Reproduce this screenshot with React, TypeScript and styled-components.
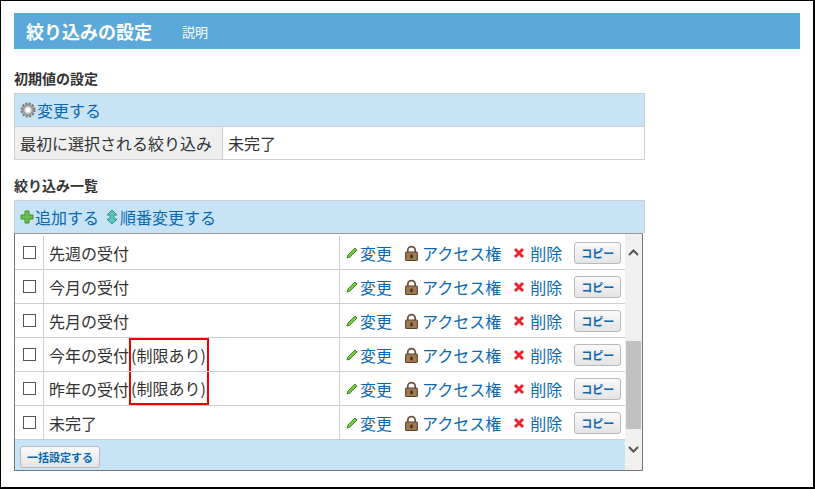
import React from 'react';
import styled, { createGlobalStyle } from 'styled-components';

const ROWS = [
  { name: '先週の受付' },
  { name: '今月の受付' },
  { name: '先月の受付' },
  { name: '今年の受付', limited: true },
  { name: '昨年の受付', limited: true },
  { name: '未完了' },
];

const Global = createGlobalStyle`
  html, body { margin: 0; padding: 0; background: #fff; }
  body { font-family: "Noto Sans CJK JP", "Liberation Sans", sans-serif; color: #333; }
`;

const Frame = styled.div`
  width: 815px;
  height: 489px;
  box-sizing: border-box;
  border: 1px solid #000;
  border-right-width: 2px;
  border-bottom-width: 2px;
  padding: 12px 13px 0 13px;
`;

const Header = styled.div`
  height: 36px;
  background: #5ba9da;
  display: flex;
  align-items: center;
  padding-left: 12px;
  gap: 30px;
  color: #fff;
  h1 { margin: 0; font-size: 18px; font-weight: 700; }
  span { font-size: 13px; }
`;

const SectionTitle = styled.div`
  font-size: 14px;
  font-weight: 700;
  margin: 18px 0 6px;
  line-height: 18px;
`;

const Table = styled.div`
  width: 629px;
  border: 1px solid #cfcfcf;
  font-size: 16px;
`;

const Toolbar = styled.div`
  height: 32px;
  background: #c7e3f6;
  display: flex;
  align-items: center;
  padding-left: 5px;
  gap: 6px;
  font-size: 16px;
`;

const Link = styled.span<{ $gap?: number }>`
  color: #0b68b0;
  display: inline-flex;
  align-items: center;
  gap: ${p => p.$gap ?? 1}px;
  white-space: nowrap;
`;

const InfoRow = styled.div`
  display: flex;
  height: 32px;
  border-top: 1px solid #cfcfcf;
  > div { display: flex; align-items: center; padding-left: 5px; }
  > div:first-child { width: 202px; background: #efefef; border-right: 1px solid #cfcfcf; }
`;

const ListBox = styled.div`
  width: 629px;
  height: 238px;
  box-sizing: border-box;
  border: 1px solid #777;
  border-top-color: #999;
  display: flex;
  overflow: hidden;
`;

const ListContent = styled.div`
  flex: 1;
  overflow: hidden;
  padding-top: 2px;
`;

const Row = styled.div`
  display: flex;
  height: 33px;
  border-bottom: 1px solid #cfcfcf;
  font-size: 16px;
`;

const CheckCell = styled.div`
  width: 28px;
  border-right: 1px solid #cfcfcf;
  display: flex;
  align-items: center;
  justify-content: center;
`;

const Box = styled.span`
  width: 11px;
  height: 11px;
  border: 1px solid #555;
  background: #fff;
`;

const NameCell = styled.div`
  width: 290px;
  border-right: 1px solid #cfcfcf;
  display: flex;
  align-items: center;
  padding-left: 5px;
`;

const Limited = styled.span<{ $first: boolean; $last: boolean }>`
  border: 2px solid #e00;
  border-top-width: ${p => (p.$first ? 2 : 0)}px;
  border-bottom-width: ${p => (p.$last ? 2 : 0)}px;
  height: 33px;
  box-sizing: border-box;
  display: flex;
  align-items: center;
  margin-top: ${p => (p.$first ? -1 : 0)}px;
  padding-right: 1px;
`;

const ActionCell = styled.div`
  flex: 1;
  display: flex;
  align-items: center;
  padding-left: 5px;
  gap: 12px;
`;

const SmallButton = styled.button`
  font-family: inherit;
  font-size: 11px;
  font-weight: 700;
  color: #0b68b0;
  background: linear-gradient(#fafafa, #e4e4e4);
  border: 1px solid #b9b9b9;
  border-radius: 3px;
  height: 22px;
  padding: 0 6px;
  margin-left: 0;
  min-width: 41px;
`;

const Footer = styled.div`
  height: 33px;
  background: #c7e3f6;
  display: flex;
  align-items: center;
  padding-left: 5px;
`;

const ScrollBar = styled.div`
  width: 17px;
  background: #f0f0f0;
  display: flex;
  flex-direction: column;
  align-items: center;
`;

const Arrow = styled.div`
  height: 17px;
  width: 17px;
  display: flex;
  align-items: center;
  justify-content: center;
`;

const Track = styled.div`
  flex: 1;
  width: 100%;
  display: flex;
  flex-direction: column;
  padding-top: 80px;
  padding-bottom: 12px;
  box-sizing: border-box;
`;

const Thumb = styled.div`
  flex: 1;
  background: #c1c1c1;
  margin: 0 1px;
`;

const Gear = () => (
  <svg width="16" height="16" viewBox="0 0 16 16">
    <circle cx="8" cy="8" r="6.5" fill="#aaa" stroke="#777" strokeDasharray="2 1.4" strokeWidth="2" />
    <circle cx="8" cy="8" r="4.2" fill="#e5e5e5" stroke="#888" />
    <circle cx="8" cy="8" r="2" fill="#fff" />
  </svg>
);

const Plus = () => (
  <svg width="14" height="14" viewBox="0 0 14 14">
    <path d="M5 1h4v4h4v4H9v4H5V9H1V5h4z" fill="#6cc04a" stroke="#3f8f2a" />
  </svg>
);

const UpDown = () => (
  <svg width="14" height="16" viewBox="0 0 14 16">
    <path d="M7 1l5 5H9v4h3l-5 5-5-5h3V6H2z" fill="#5cc9c0" stroke="#2f948c" />
  </svg>
);

const Pencil = () => (
  <svg width="14" height="14" viewBox="0 0 14 14">
    <path d="M2 12l1-3 7-7 2 2-7 7z" fill="#7ac943" stroke="#3e8a1e" />
  </svg>
);

const Lock = () => (
  <svg width="15" height="16" viewBox="0 0 14 15">
    <path d="M3.5 7V5a3.5 3.5 0 0 1 7 0v2" fill="none" stroke="#6b5137" strokeWidth="1.6" />
    <rect x="1.5" y="6.5" width="11" height="8" rx="1" fill="#a07a52" stroke="#5a4128" />
    <rect x="6" y="9" width="2" height="3.5" fill="#3a2a18" />
  </svg>
);

const Cross = () => (
  <svg width="12" height="12" viewBox="0 0 12 12">
    <path d="M2 2l8 8M10 2l-8 8" stroke="#e8262a" strokeWidth="3" />
  </svg>
);

const Chevron = ({ up }: { up?: boolean }) => (
  <svg width="11" height="7" viewBox="0 0 11 7">
    <path d={up ? 'M1 6l4.5-4.5L10 6' : 'M1 1l4.5 4.5L10 1'} fill="none" stroke="#555" strokeWidth="2" />
  </svg>
);

export default function App() {
  return (
    <Frame>
      <Global />
      <Header>
        <h1>絞り込みの設定</h1>
        <span>説明</span>
      </Header>
      <SectionTitle style={{ marginTop: 20 }}>初期値の設定</SectionTitle>
      <Table>
        <Toolbar>
          <Link><Gear />変更する</Link>
        </Toolbar>
        <InfoRow>
          <div>最初に選択される絞り込み</div>
          <div>未完了</div>
        </InfoRow>
      </Table>
      <SectionTitle style={{ marginTop: 16 }}>絞り込み一覧</SectionTitle>
      <Toolbar style={{ width: 624, border: '1px solid #cfcfcf', borderBottom: 0 }}>
        <Link><Plus />追加する</Link>
        <Link><UpDown />順番変更する</Link>
      </Toolbar>
      <ListBox>
        <ListContent>
          {ROWS.map((r, i) => (
            <Row key={r.name}>
              <CheckCell><Box /></CheckCell>
              <NameCell>
                {r.limited ? (
                  <>
                    {r.name}
                    <Limited $first={i === 3} $last={i === 4}>(制限あり)</Limited>
                  </>
                ) : (
                  r.name
                )}
              </NameCell>
              <ActionCell>
                <Link><Pencil />変更</Link>
                <Link $gap={3}><Lock />アクセス権</Link>
                <Link $gap={5}><Cross />削除</Link>
                <SmallButton>コピー</SmallButton>
              </ActionCell>
            </Row>
          ))}
          <Footer>
            <SmallButton>一括設定する</SmallButton>
          </Footer>
        </ListContent>
        <ScrollBar>
          <Arrow style={{ marginTop: 10 }}><Chevron up /></Arrow>
          <Track><Thumb /></Track>
          <Arrow style={{ marginBottom: 12 }}><Chevron /></Arrow>
        </ScrollBar>
      </ListBox>
    </Frame>
  );
}
